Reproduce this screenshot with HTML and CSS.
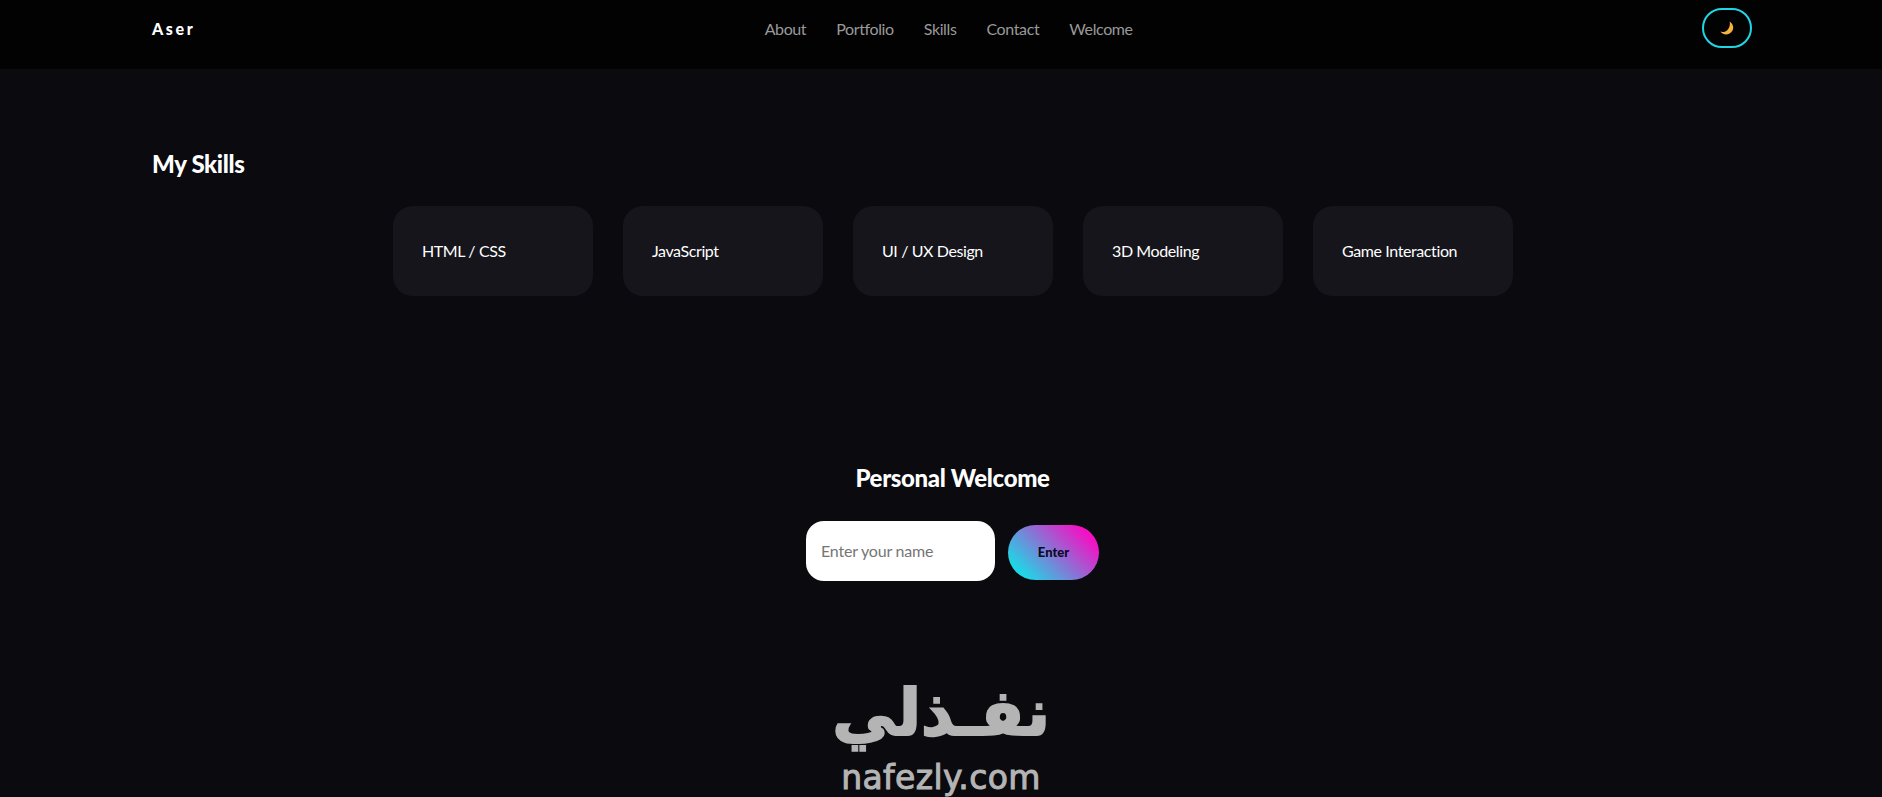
FILE: index.html
```html
<!DOCTYPE html>
<html>
<head>
  <meta charset="utf-8">
  <link rel="stylesheet" href="styles.css">
</head>
<body>
  <header class="site-header">
    <div class="logo">Aser</div>
    <nav class="nav-links">
      <a href="#about">About</a>
      <a href="#portfolio">Portfolio</a>
      <a href="#skills">Skills</a>
      <a href="#contact">Contact</a>
      <a href="#welcome">Welcome</a>
    </nav>
    <button class="theme-toggle" aria-label="Toggle theme">
      <svg class="moon" viewBox="0 0 14 14" width="14" height="14">
        <path d="M9.6 0.4C13 2.4 14.2 6.6 12.4 9.8C10.6 13 6.2 14.4 3 12.8C2 12.3 1 11.5 0.5 10.6C1.6 11.2 3.6 11.2 5.4 10.4C8.8 8.8 10.6 4.4 9.6 0.4Z"/>
      </svg>
    </button>
  </header>

  <section class="skills" id="skills">
    <h2>My Skills</h2>
    <div class="skills-grid">
      <div class="skill-card">HTML / CSS</div>
      <div class="skill-card">JavaScript</div>
      <div class="skill-card">UI / UX Design</div>
      <div class="skill-card">3D Modeling</div>
      <div class="skill-card">Game Interaction</div>
    </div>
  </section>

  <section class="welcome" id="welcome">
    <h2>Personal Welcome</h2>
    <div class="welcome-form">
      <input type="text" class="name-input" placeholder="Enter your name">
      <button class="enter-btn">Enter</button>
    </div>
  </section>

  <div class="watermark">
    <div class="watermark-ar" lang="ar" dir="rtl">نفـذلي</div>
    <div class="watermark-en">nafezly.com</div>
  </div>
</body>
</html>
```

FILE: styles.css
```css
:root {
  --page-bg: #0a0a0f;
  --card-bg: #15151b;
  --cyan: #1fd6e6;
  --magenta: #f510c4;
}

* {
  box-sizing: border-box;
  margin: 0;
  padding: 0;
}

html, body {
  height: 100%;
  overflow: hidden;
}

body {
  position: relative;
  font-family: Lato, Roboto, "Noto Sans", sans-serif;
  background: var(--page-bg);
  color: #fff;
}

.site-header {
  display: flex;
  align-items: center;
  justify-content: space-between;
  height: 69px;
  padding: 0 130px 13px 152px;
  background: #020203;
}

.logo {
  font-size: 16px;
  font-weight: 900;
  letter-spacing: 2.6px;
}

.nav-links {
  display: flex;
  gap: 30px;
}

.nav-links a {
  font-size: 16px;
  letter-spacing: -0.38px;
  color: #999;
  text-decoration: none;
}

.theme-toggle {
  display: flex;
  align-items: center;
  justify-content: center;
  width: 50px;
  height: 40px;
  background: transparent;
  border: 2px solid var(--cyan);
  border-radius: 20px;
}

.moon {
  fill: #f5b23e;
}

.skills {
  padding: 79px 128px 0 152px;
}

.skills h2 {
  font-size: 24px;
  line-height: 32px;
  font-weight: 900;
  letter-spacing: -0.35px;
  margin-bottom: 26px;
}

.skills-grid {
  display: flex;
  justify-content: center;
  gap: 30px;
}

.skill-card {
  display: flex;
  align-items: center;
  width: 200px;
  height: 90px;
  padding: 0 29px 2px;
  background: var(--card-bg);
  border-radius: 20px;
  font-size: 16px;
  letter-spacing: -0.4px;
}

.welcome {
  display: flex;
  flex-direction: column;
  align-items: center;
  padding: 166px 129px 0 152px;
}

.welcome h2 {
  font-size: 24px;
  line-height: 32px;
  font-weight: 900;
  letter-spacing: -0.35px;
  margin-bottom: 27px;
}

.welcome-form {
  display: flex;
  align-items: center;
  gap: 13px;
}

.name-input {
  width: 189px;
  height: 60px;
  padding: 0 15px 2px;
  background: #fff;
  border: none;
  border-radius: 18px;
  font-family: inherit;
  font-size: 16px;
  letter-spacing: -0.2px;
  color: #111;
}

.name-input::placeholder {
  color: #757575;
}

.enter-btn {
  width: 91px;
  height: 55px;
  margin-top: 2px;
  border: none;
  border-radius: 28px;
  background: linear-gradient(45deg, var(--cyan) 14%, var(--magenta) 86%);
  font-family: inherit;
  font-size: 13px;
  font-weight: 900;
  color: #0a0a1f;
}

/* watermark sits over the page, pinned to the bottom */
.watermark {
  position: absolute;
  left: 835px;
  bottom: 0;
  width: 212px;
  color: #b4b4b4;
  text-align: center;
}

.watermark-ar {
  margin-right: -3px;
  font-family: "DejaVu Sans", sans-serif;
  font-size: 64px;
  font-weight: 700;
  line-height: 78px;
  padding-bottom: 7px;
  -webkit-text-stroke: 2px #b4b4b4;
}

.watermark-en {
  font-family: "DejaVu Sans", sans-serif;
  font-size: 33px;
  line-height: 38px;
  letter-spacing: 0.4px;
  -webkit-text-stroke: 1px #b4b4b4;
}
```
